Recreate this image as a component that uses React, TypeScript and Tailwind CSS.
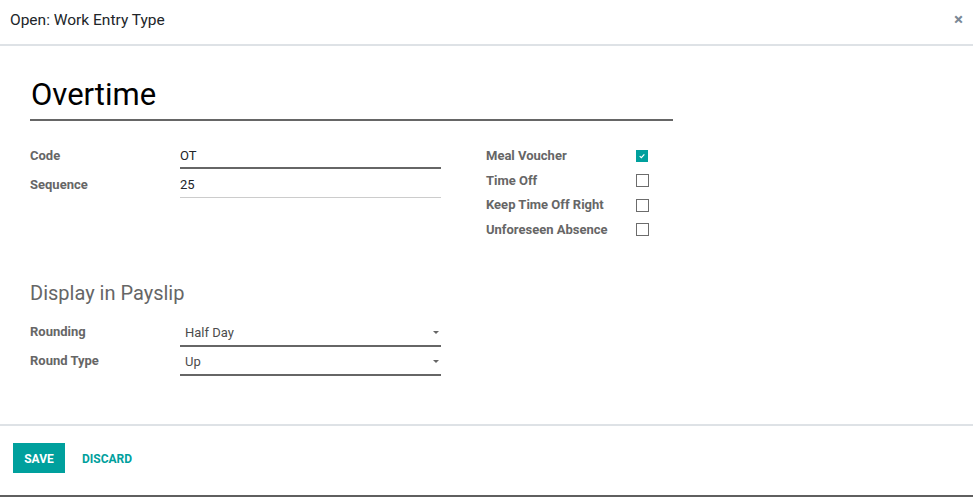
import * as React from "react";

const font = { fontFamily: "Roboto, 'Noto Sans', sans-serif" };

function Field({ value, strong }: { value: string; strong?: boolean }) {
  return (
    <div
      className={
        "h-[25px] w-[261px] pt-[2px] text-[13px] leading-[20px] text-[#212529] " +
        (strong ? "border-b-2 border-[#666666]" : "h-[24px] border-b border-[#cccccc]")
      }
    >
      {value}
    </div>
  );
}

function Select({ value }: { value: string }) {
  return (
    <div className="flex h-[27px] w-[261px] items-start justify-between border-b-2 border-[#666666] pl-[5px] pr-[2px] pt-[3px] text-[13px] leading-[20px] text-[#4c4c4c]">
      <span>{value}</span>
      <span className="mt-[8px] h-0 w-0 border-x-[3px] border-t-[3px] border-x-transparent border-t-[#666666]" />
    </div>
  );
}

function Check({ checked }: { checked?: boolean }) {
  if (checked) {
    return (
      <span className="flex h-[12px] w-[12px] items-center justify-center bg-[#00a09d]">
        <svg viewBox="0 0 12 12" className="h-[8px] w-[8px]" fill="none" stroke="white" strokeWidth="1.8">
          <path d="M2.5 6.2 L5 8.5 L9.5 3.5" />
        </svg>
      </span>
    );
  }
  return <span className="h-[13px] w-[13px] border-[1.5px] border-[#6c6c6c] bg-white" />;
}

export default function App() {
  const bools: [string, boolean][] = [
    ["Meal Voucher", true],
    ["Time Off", false],
    ["Keep Time Off Right", false],
    ["Unforeseen Absence", false],
  ];

  return (
    <div className="flex h-[497px] w-[973px] flex-col bg-white" style={font}>
      <header className="flex h-[46px] shrink-0 items-center justify-between border-b-2 border-[#dee2e6] pl-[10px] pr-[10px]">
        <h4 className="-mt-[3px] text-[15.5px] text-[#212529]">Open: Work Entry Type</h4>
        <button type="button" className="-mt-[5px] text-[17px] font-bold leading-none text-[#7a8896]">
          ×
        </button>
      </header>

      <main className="h-[378px] shrink-0 px-[30px] pt-[31px]">
        <div className="w-[643px] border-b-2 border-[#666666] pb-[6px]">
          <h1 className="pl-[1px] text-[31px] leading-[36px] text-[#000000]">Overtime</h1>
        </div>

        <div className="mt-[23px] flex">
          <div className="w-[456px]">
            <div className="flex h-[29px]">
              <label className="w-[150px] pt-[2px] text-[13px] font-bold leading-[20px] text-[#666666]">Code</label>
              <Field value="OT" strong />
            </div>
            <div className="flex h-[29px]">
              <label className="w-[150px] pt-[2px] text-[13px] font-bold leading-[20px] text-[#666666]">Sequence</label>
              <Field value="25" />
            </div>
          </div>
          <div>
            {bools.map(([label, checked]) => (
              <div key={label} className="flex h-[24.5px] items-start">
                <label className="w-[150px] pt-[2px] text-[13px] font-bold leading-[20px] text-[#666666]">{label}</label>
                <span className="flex h-[24px] items-center">
                  <Check checked={checked} />
                </span>
              </div>
            ))}
          </div>
        </div>

        <h2 className="mt-[39px] text-[20px] leading-[24px] text-[#666666]">Display in Payslip</h2>

        <div className="mt-[15px] flex flex-col gap-[2px]">
          <div className="flex">
            <label className="w-[150px] pt-[2px] text-[13px] font-bold leading-[20px] text-[#666666]">Rounding</label>
            <Select value="Half Day" />
          </div>
          <div className="flex">
            <label className="w-[150px] pt-[2px] text-[13px] font-bold leading-[20px] text-[#666666]">Round Type</label>
            <Select value="Up" />
          </div>
        </div>
      </main>

      <footer className="flex h-[71px] shrink-0 items-start border-t-2 border-[#dee2e6] pl-[13px] pt-[17px]">
        <button type="button" className="h-[30px] w-[52px] bg-[#00a09d] pt-[1px] text-[12px] font-bold uppercase text-white">
          Save
        </button>
        <button type="button" className="ml-[17px] h-[30px] pt-[1px] text-[12px] font-bold uppercase text-[#00a09d]">
          Discard
        </button>
      </footer>
      <div className="h-[2px] shrink-0 bg-[#5f5f5f]" />
    </div>
  );
}
